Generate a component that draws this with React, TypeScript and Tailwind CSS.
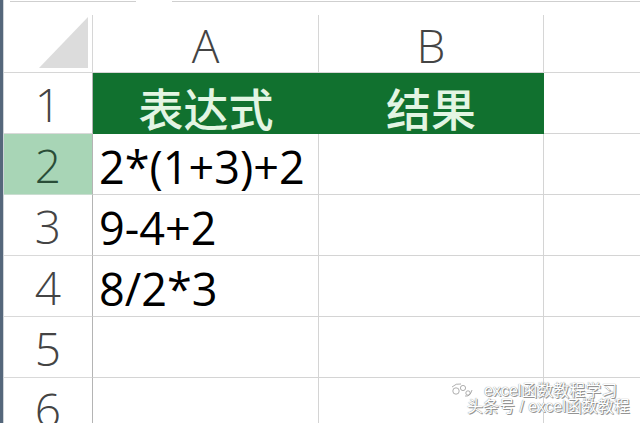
import React from "react";

const rows = [
  { n: "1", a: "表达式", b: "结果", head: true },
  { n: "2", a: "2*(1+3)+2", b: "", active: true },
  { n: "3", a: "9-4+2", b: "" },
  { n: "4", a: "8/2*3", b: "" },
  { n: "5", a: "", b: "" },
  { n: "6", a: "", b: "" },
];

function Corner() {
  return (
    <svg width="50" height="52" viewBox="0 0 50 52" className="mr-[3px] mb-[3px]">
      <polygon points="49,0 49,51 0,51" fill="#dcdcdc" />
    </svg>
  );
}

function Watermark() {
  return (
    <div className="absolute left-[450px] top-[382px] flex flex-col text-[16px] leading-[15px] text-white [font-family:'Liberation_Sans','Noto_Sans_CJK_SC',sans-serif] [text-shadow:0_0_1px_#666,1px_1px_0_#999]">
      <div className="flex items-center gap-[10px]">
        <svg width="24" height="16" viewBox="0 0 24 16">
          <g fill="#fff" stroke="#9a9a9a" strokeWidth="0.8">
            <circle cx="6" cy="9" r="3.2" />
            <circle cx="13" cy="6" r="2.6" />
            <circle cx="18" cy="11" r="2.2" />
            <path d="M2 5 Q6 1 11 2" fill="none" />
            <path d="M15 14 Q20 15 22 8" fill="none" />
          </g>
        </svg>
        <span>excel函数教程学习</span>
      </div>
      <div className="mt-[1px] ml-[17px]">头条号 / excel函数教程</div>
    </div>
  );
}

export default function App() {
  return (
    <div className="relative flex h-[423px] w-[640px] overflow-hidden bg-white [font-family:'Open_Sans','Liberation_Sans','Noto_Sans_CJK_SC',sans-serif]">
      <div className="w-[4px] shrink-0 border-r border-[#cfd4d8] bg-[#55677b]" />
      <div className="flex flex-1 flex-col">
        <div className="flex h-[15px] shrink-0 items-start pt-px">
          <div className="ml-[6px] h-px w-[126px] bg-[#cfcfcf]" />
          <div className="ml-[36px] h-px flex-1 bg-[#cfcfcf]" />
        </div>

        <div className="grid h-[58px] shrink-0 grid-cols-[89px_226px_225px_1fr] text-[46px] leading-[46px] font-light text-[#444]">
          <div className="flex items-end justify-end border-r border-b border-[#d6d6d6]">
            <Corner />
          </div>
          <div className="flex items-end justify-center border-r border-b border-[#d6d6d6] pb-[4px]">A</div>
          <div className="flex items-end justify-center border-r border-b border-[#d6d6d6] pb-[4px]">B</div>
          <div className="border-b border-[#d6d6d6]" />
        </div>

        {rows.map((r) => (
          <div key={r.n} className="grid h-[61px] shrink-0 grid-cols-[89px_226px_225px_1fr]">
            <div
              className={`flex items-end justify-center border-r border-b pb-[6px] text-[46px] leading-[46px] font-light ${
                r.active
                  ? "border-r-[#b4b4b4] border-b-[#c9ddd0] bg-[#a8d5b6] text-[#2a4d38]"
                  : "border-r-[#b4b4b4] border-b-[#d9d9d9] text-[#444]"
              }`}
            >
              {r.n}
            </div>
            {r.head ? (
              <>
                <div className="flex items-end justify-center bg-[#11712f] pb-[4px] text-[45px] font-medium leading-[45px] text-[#e3f5e3] [font-family:'Noto_Sans_CJK_SC',sans-serif]">
                  {r.a}
                </div>
                <div className="flex items-end justify-center border-r border-[#11712f] bg-[#11712f] pb-[4px] text-[45px] font-medium leading-[45px] text-[#e3f5e3] [font-family:'Noto_Sans_CJK_SC',sans-serif]">
                  {r.b}
                </div>
              </>
            ) : (
              <>
                <div className="flex items-end border-r border-b border-[#d4d4d4] pb-[5px] pl-[6px] text-[45px] leading-[45px] text-black">
                  {r.a}
                </div>
                <div className="border-r border-b border-[#d4d4d4]" />
              </>
            )}
            <div className="border-b border-[#d4d4d4]" />
          </div>
        ))}
      </div>
      <Watermark />
    </div>
  );
}
